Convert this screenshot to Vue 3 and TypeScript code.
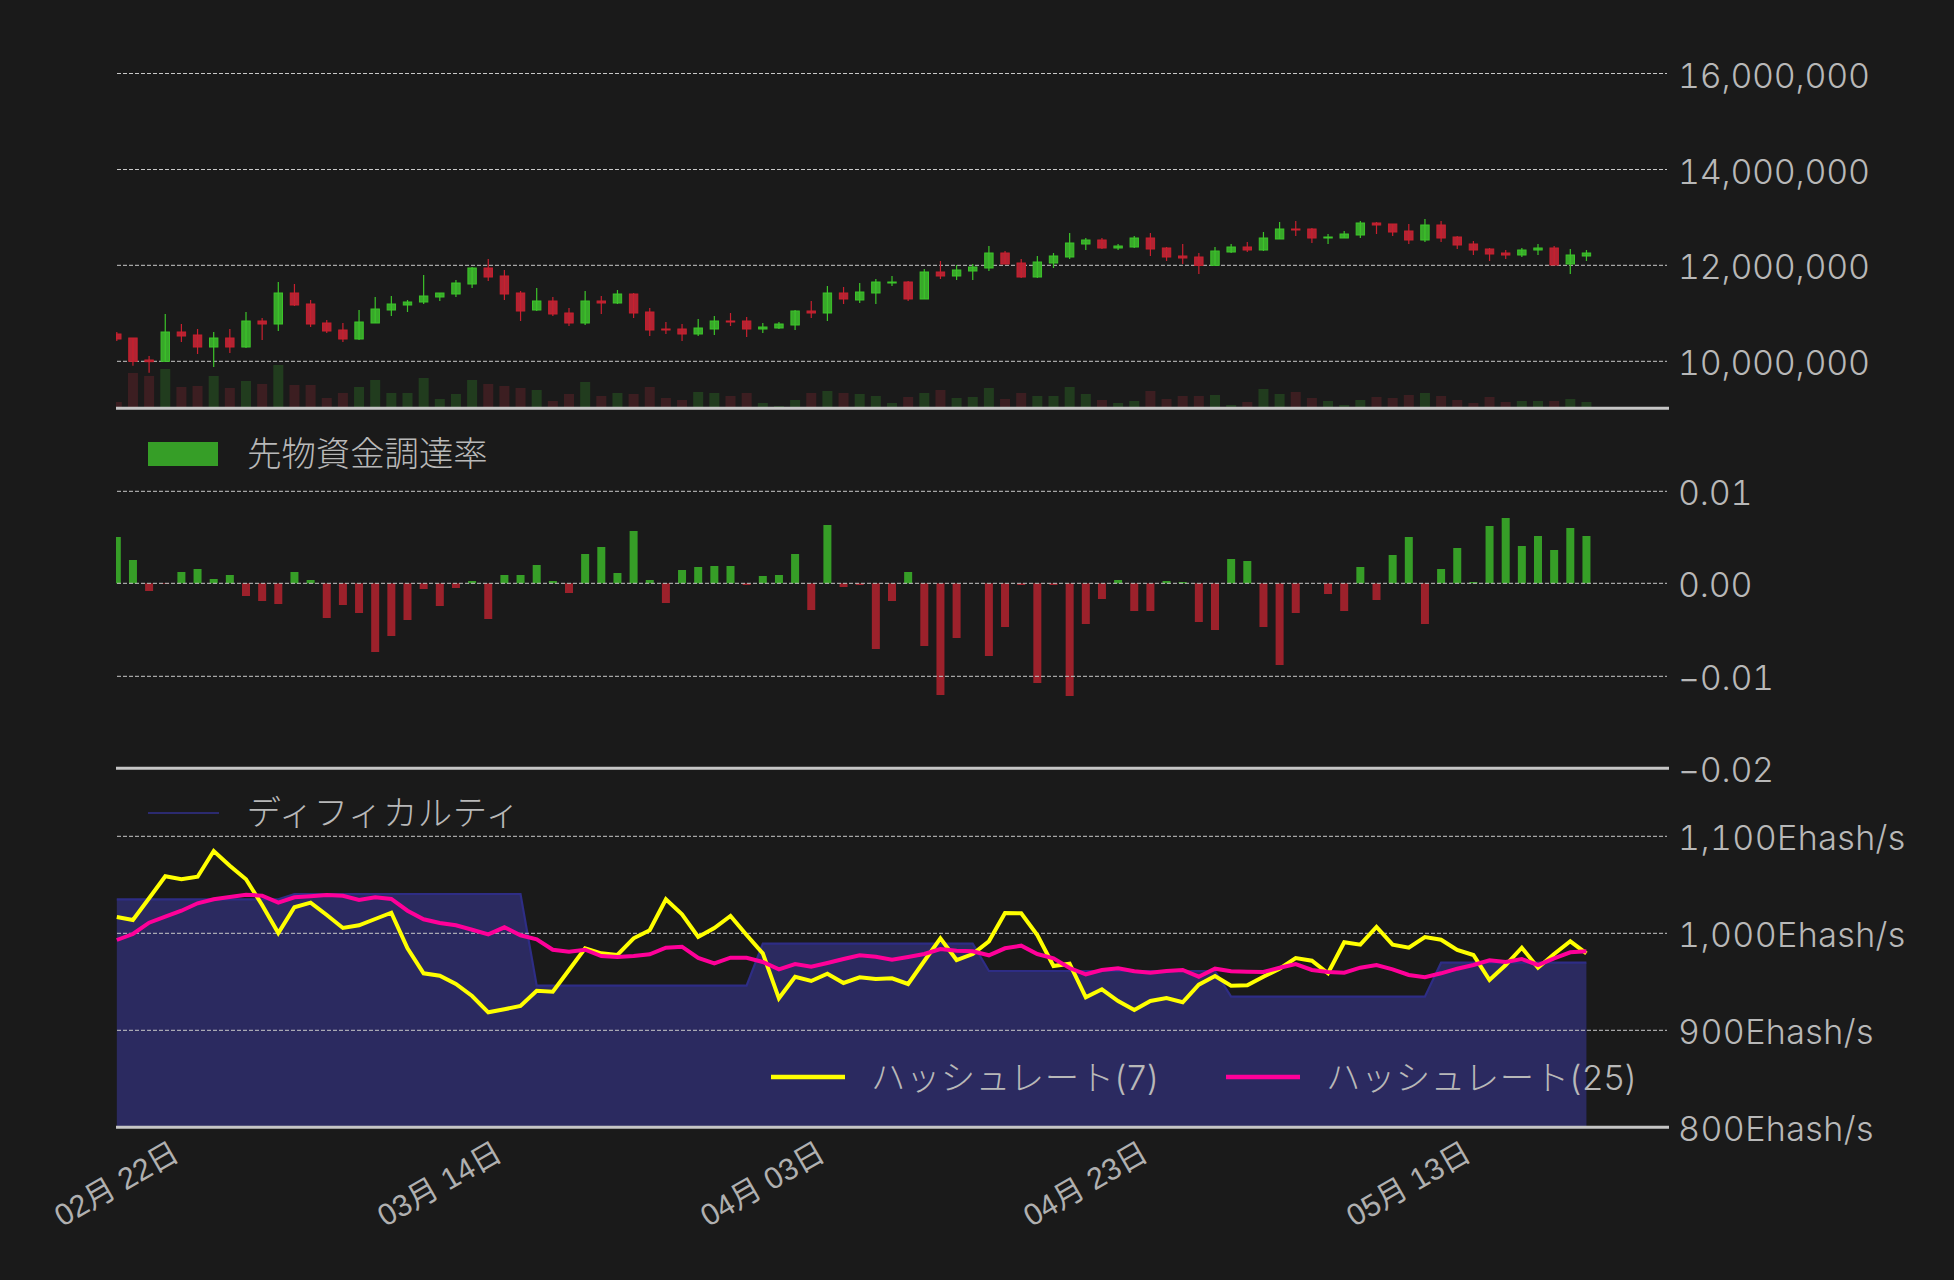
<script setup lang="ts">
// values are read off the reference in "zoomed" rows: y = top + z / 3
type Candle = [number, number, number, number, number]

const plotLeft = 116
const plotRight = 1669
const step = 16.15
const xOf = (i: number) => 116.8 + i * step

// wick top, body top, body bottom, wick bottom, up(1)/down(0)
const candles: Candle[] = [
  [396,402,417,423,0],[414,414,484,497,0],[468,480,485,518,0],[342,396,484,484,1],[372,396,408,426,0],
  [387,405,441,462,0],[396,414,441,501,1],[387,414,441,459,0],[336,363,441,444,1],[354,363,372,420,0],
  [246,279,372,393,1],[252,279,315,318,0],[300,312,372,381,0],[360,369,393,399,0],[369,390,417,426,0],
  [330,366,417,420,1],[291,327,369,369,1],[288,312,330,348,1],[300,306,315,336,1],[225,288,306,312,1],
  [279,279,291,303,1],[240,249,282,291,1],[201,204,252,264,1],[177,204,231,243,0],[210,228,282,300,0],
  [273,279,333,363,0],[264,303,330,333,1],[291,303,342,348,0],[324,339,369,378,0],[273,303,369,375,1],
  [288,303,309,342,0],[270,282,309,312,1],[279,282,339,354,0],[324,336,390,408,0],[366,387,390,402,0],
  [372,387,402,423,0],[357,384,402,408,1],[348,363,387,405,1],[339,363,366,378,0],[351,363,387,411,0],
  [369,381,387,399,1],[366,372,384,387,1],[330,333,375,390,1],[303,333,339,354,0],[258,279,339,363,1],
  [261,279,297,312,0],[249,276,300,309,1],[237,246,279,312,1],[228,246,249,258,1],[243,246,297,303,0],
  [207,216,297,297,1],[183,216,228,237,0],[195,210,228,240,1],[192,201,213,240,1],[138,159,204,213,1],
  [153,159,192,192,0],[177,189,231,234,0],[168,186,231,234,1],[159,168,189,204,1],[99,129,171,177,1],
  [114,120,132,150,1],[114,120,144,147,0],[132,138,144,150,1],[108,114,141,144,1],[99,114,147,168,0],
  [141,144,171,183,0],[132,168,174,192,0],[159,171,196,222,0],[141,153,196,196,1],[132,141,156,159,1],
  [126,141,150,156,0],[96,114,150,153,1],[66,87,117,117,1],[63,87,90,108,0],[84,87,114,129,0],
  [102,111,114,132,1],[93,102,114,114,1],[63,69,105,114,1],[66,69,75,102,0],[72,72,96,108,0],
  [72,93,120,132,0],[57,75,120,126,1],[63,75,114,126,0],[108,111,135,147,0],[123,132,150,165,0],
  [144,147,162,183,0],[150,159,165,177,0],[144,150,165,171,1],[132,144,150,165,1],[138,144,195,195,0],
  [147,165,192,222,1],[150,159,168,183,1],
]

const volumes = [
  606,519,528,507,561,558,528,564,543,552,495,555,555,594,579,561,540,579,579,534,597,582,540,
  552,558,564,570,603,582,546,588,579,582,561,594,600,576,579,588,579,609,618,600,579,573,579,
  582,588,609,591,579,570,594,591,564,597,579,588,588,561,582,600,609,603,573,597,588,588,585,
  615,606,567,582,576,594,603,615,600,591,594,585,579,588,600,609,591,606,603,603,603,597,606,
]

// tip of each funding bar, 250 is the zero line
const funding = [
  111,180,273,252,216,207,237,225,288,303,312,216,240,354,315,339,456,408,360,267,318,264,243,
  357,225,225,195,243,279,162,141,219,93,240,309,210,201,198,198,255,228,225,162,330,75,261,
  255,447,303,216,438,585,414,250,468,381,255,549,255,588,372,297,240,333,333,243,246,366,390,
  177,183,381,495,339,250,282,333,201,300,165,111,372,207,144,246,78,54,138,108,150,84,108,
]

const hash7 = [
  411,420,355,289,298,290,213,257,298,375,459,382,368,405,444,436,417,398,505,580,587,612,648,
  697,688,678,632,635,570,505,520,525,475,451,358,403,471,444,408,465,520,655,590,603,581,609,
  592,597,595,612,543,475,540,522,484,399,400,465,558,551,652,628,663,690,663,654,667,614,588,
  617,616,590,566,534,542,580,487,494,441,494,503,471,479,510,525,600,555,503,563,522,484,520,
]

const hash25 = [
  480,462,428,410,392,370,358,351,344,347,368,352,349,345,347,360,352,357,392,418,429,436,449,
  463,442,466,478,509,515,509,528,531,528,523,503,500,534,550,533,533,546,568,552,560,549,537,
  526,530,539,531,522,507,512,514,526,505,497,522,535,564,583,570,565,574,578,573,570,590,566,
  574,575,576,563,552,570,576,578,563,555,568,585,592,580,566,555,541,546,537,555,535,517,514,
]

// [index, row] corners of the difficulty steps
const difficulty = [
  [0,358],[10,358],[11,342],[25,342],[26,617],[39,617],[40,491],[53,491],[54,573],[68,573],
  [69,650],[81,650],[82,548],[91,548],
]

const top1 = (z: number) => 200 + z / 3
const top2 = (z: number) => 500 + z / 3
const top3 = (z: number) => 780 + z / 3

const gridLines = [73.5, 169.5, 265.3, 361.3, 491.3, 583.3, 676.3, 836.3, 933.3, 1030.3]
const baseLines = [408.3, 768.3, 1127.3]

const yLabels = [
  { y: 73.5, text: '16,000,000' },
  { y: 169.5, text: '14,000,000' },
  { y: 265.3, text: '12,000,000' },
  { y: 361.3, text: '10,000,000' },
  { y: 491.3, text: '0.01' },
  { y: 583.3, text: '0.00' },
  { y: 676.3, text: '−0.01' },
  { y: 768.3, text: '−0.02' },
  { y: 836.3, text: '1,100Ehash/s' },
  { y: 933.3, text: '1,000Ehash/s' },
  { y: 1030.3, text: '900Ehash/s' },
  { y: 1127.3, text: '800Ehash/s' },
]

const xLabels = [
  { i: 0, text: '02月 22日' },
  { i: 20, text: '03月 14日' },
  { i: 40, text: '04月 03日' },
  { i: 60, text: '04月 23日' },
  { i: 80, text: '05月 13日' },
]

const linePoints = (rows: number[]) =>
  rows.map((z, i) => `${xOf(i).toFixed(1)},${top3(z).toFixed(1)}`).join(' ')

const difficultyLine = difficulty
  .map(([i, z]) => `${xOf(i).toFixed(1)},${top3(z).toFixed(1)}`)
  .join(' ')
const difficultyArea = `${xOf(0)},1127 ${difficultyLine} ${xOf(91)},1127`
</script>

<template>
  <div class="page">
    <svg class="chart" width="1954" height="1280" viewBox="0 0 1954 1280">
      <defs>
        <clipPath id="plot">
          <rect :x="plotLeft" y="0" :width="plotRight - plotLeft" height="1280" />
        </clipPath>
      </defs>

      <g clip-path="url(#plot)">
        <!-- difficulty area sits under the grid -->
        <polygon class="area" :points="difficultyArea" />
        <polyline class="area-line" :points="difficultyLine" />

        <!-- volume -->
        <rect
          v-for="(z, i) in volumes"
          :key="'v' + i"
          :class="candles[i][4] ? 'vol-up' : 'vol-down'"
          :x="xOf(i) - 5"
          :y="top1(z)"
          width="10"
          :height="407 - top1(z)"
        />

        <!-- funding rate -->
        <rect
          v-for="(z, i) in funding"
          :key="'f' + i"
          :class="z < 250 ? 'bar-up' : 'bar-down'"
          :x="xOf(i) - 4"
          :y="top2(Math.min(z, 250))"
          width="8"
          :height="Math.abs(z - 250) / 3"
        />
      </g>

      <line
        v-for="y in gridLines"
        :key="y"
        class="grid"
        x1="117"
        :y1="y"
        x2="1667"
        :y2="y"
      />

      <g clip-path="url(#plot)">
        <!-- candles -->
        <g v-for="(c, i) in candles" :key="'c' + i" :class="c[4] ? 'up' : 'down'">
          <rect
            class="body"
            :x="xOf(i) - 4.2"
            :y="top1(c[1])"
            width="8.4"
            :height="Math.max((c[2] - c[1]) / 3, 1)"
          />
          <line class="wick" :x1="xOf(i)" :y1="top1(c[0])" :x2="xOf(i)" :y2="top1(c[3])" />
        </g>

        <polyline class="hash7" :points="linePoints(hash7)" />
        <polyline class="hash25" :points="linePoints(hash25)" />
      </g>

      <line
        v-for="y in baseLines"
        :key="y"
        class="base"
        x1="116"
        :y1="y"
        x2="1669"
        :y2="y"
      />

      <text
        v-for="l in yLabels"
        :key="l.text"
        :class="['y-label', { 'y-label-unit': l.text.includes('Ehash') }]"
        x="1678"
        :y="l.y + 14"
      >{{ l.text }}</text>

      <text
        v-for="l in xLabels"
        :key="l.text"
        class="x-label"
        text-anchor="middle"
        :transform="`translate(${xOf(l.i) + 5} 1193) rotate(-30)`"
      >{{ l.text }}</text>

      <!-- legends -->
      <rect class="bar-up" x="148" y="442" width="70" height="24" />
      <text class="legend" x="247" y="466">先物資金調達率</text>

      <line class="legend-area" x1="148" y1="813" x2="219" y2="813" />
      <text class="legend legend-kana" x="246.5" y="825">ディフィカルティ</text>

      <line class="legend-7" x1="771" y1="1077" x2="845" y2="1077" />
      <text class="legend legend-kana" x="871" y="1090">ハッシュレート(7)</text>

      <line class="legend-25" x1="1226" y1="1077" x2="1300" y2="1077" />
      <text class="legend legend-kana" x="1326" y="1090">ハッシュレート(25)</text>
    </svg>
  </div>
</template>

<style scoped>
.page {
  width: 1954px;
  height: 1280px;
  background: #1a1a1a;
}
.chart {
  display: block;
}
.grid {
  stroke: #c8c8c8;
  stroke-width: 1;
  stroke-dasharray: 4 2;
}
.base {
  stroke: #c6c6c6;
  stroke-width: 3;
}
.area {
  fill: #2b2a60;
}
.area-line {
  fill: none;
  stroke: #2e2d85;
  stroke-width: 2.2;
}
.vol-up {
  fill: #213c1e;
}
.vol-down {
  fill: #3c1e21;
}
.bar-up {
  fill: #369e27;
}
.bar-down {
  fill: #9c212b;
}
.up .body {
  fill: #38a82a;
  stroke: #3cc42a;
}
.up .wick {
  stroke: #3cc42a;
}
.down .body {
  fill: #b22433;
  stroke: #c8202f;
}
.down .wick {
  stroke: #c8202f;
}
.body {
  stroke-width: 1;
}
.wick {
  stroke-width: 1.2;
}
.hash7 {
  fill: none;
  stroke: #ffff00;
  stroke-width: 4;
  stroke-linejoin: miter;
}
.hash25 {
  fill: none;
  stroke: #ff0099;
  stroke-width: 4;
}
.y-label {
  font-family: Inter, "Noto Sans CJK JP", sans-serif;
  font-weight: 300;
  font-size: 34px;
  font-variant-numeric: tabular-nums;
  letter-spacing: -0.25px;
  fill: #b8b8b8;
}
.y-label-unit {
  letter-spacing: 0.4px;
}
.x-label {
  font-family: "Liberation Sans", "Noto Sans CJK JP", sans-serif;
  font-size: 30.5px;
  fill: #b0b0b0;
}
.legend {
  font-family: Inter, "Noto Sans CJK JP", sans-serif;
  font-weight: 300;
  font-size: 34.4px;
  fill: #b8b8b8;
}
.legend-kana {
  letter-spacing: 0.5px;
}
.legend-area {
  stroke: #2b2a6f;
  stroke-width: 2;
}
.legend-7 {
  stroke: #ffff00;
  stroke-width: 4.5;
}
.legend-25 {
  stroke: #ff0099;
  stroke-width: 4.5;
}
</style>
